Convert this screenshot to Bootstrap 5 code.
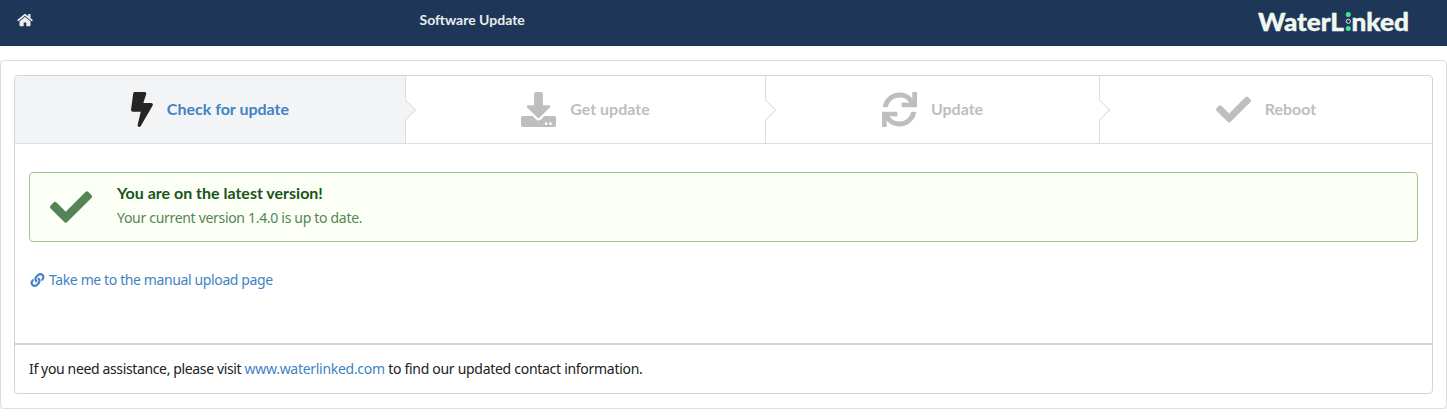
<!DOCTYPE html>
<html lang="en">
<head>
<meta charset="utf-8">
<meta name="viewport" content="width=device-width, initial-scale=1">
<title>Software Update</title>
<link href="https://cdn.jsdelivr.net/npm/bootstrap@5.3.0/dist/css/bootstrap.min.css" rel="stylesheet">
<style>
body{font:14px/20px "Noto Sans","Open Sans",sans-serif;color:#212121;background:#fff}
a{color:#4183c4;text-decoration:none}
.topbar{height:46px;background:#1e3658}
.topbar .home-link{width:403.5px;padding-left:17px;height:15px;line-height:0;margin-bottom:6px}
.page-title{font:bold 14px/20px Lato,sans-serif;color:#e9ebee;margin-bottom:6px}
.brand-logo{margin-right:38px}
.panel{margin-top:14px;height:349px;padding:14px 13px;border:1px solid #dcdddd;border-radius:4px;box-shadow:0 1px 2px rgba(34,36,38,.15)}
.box{height:319px;border:1px solid #d4d4d5;border-radius:4px}
.steps{height:68px;border-bottom:1px solid #dcdddd}
.step-cell{position:relative;gap:14px;border-right:1px solid #dcdddd;color:#bebebe;font:bold 16px/20px Lato,sans-serif}
.step-cell:nth-child(1){width:391px;background:#f3f4f5;border-radius:3px 0 0 0}
.step-cell:nth-child(2){width:360px}
.step-cell:nth-child(3){width:334px}
.step-cell:nth-child(4){width:332px;border-right:0}
.step-cell:not(:last-child)::after{content:"";position:absolute;z-index:1;right:-7.5px;top:calc(50% + .5px);width:15px;height:15px;background:#fff;border:solid #dcdddd;border-width:0 1px 1px 0;transform:translateY(-50%) rotate(-45deg)}
.step-cell:first-child::after{background:#f3f4f5}
.step-cell svg{height:35px;fill:currentColor}
.step-cell span{margin-bottom:2px}
.current-title{color:#4183c4}
.bolt{color:#252525}
.body-area{height:201px;padding:28px 14px 0;border-bottom:2px solid #d4d4d5}
.notice{height:70px;padding:0 20px;gap:25px;background:#fcfff5;border:1px solid #a3c293;border-radius:4px;color:#548455}
.notice h1{font:bold 16px/20px Lato,sans-serif;color:#1a531b;margin:0 0 5px}
.notice-text{margin-bottom:3px}
.txt-a{letter-spacing:-.31px}
.txt-b{letter-spacing:-.38px}
.upload-link{margin:28px 0 0 .5px;gap:4.5px}
.help{height:48px;padding:0 14px 1px;letter-spacing:-.29px}
.help .lead-in{letter-spacing:-.36px}
</style>
</head>
<body>
<nav class="topbar d-flex align-items-center">
  <a class="home-link" href="#" aria-label="Home"><svg width="16" height="14" viewBox="0 0 576 512" fill="#e9ebee"><path d="M488 312.7V456c0 13.3-10.7 24-24 24H348c-6.600 0-12-5.400-12-12V356c0-6.600-5.400-12-12-12h-72c-6.600 0-12 5.400-12 12v112c0 6.600-5.400 12-12 12H112c-13.300 0-24-10.700-24-24V312.700c0-3.600 1.600-7 4.400-9.300l188-154.800c4.400-3.600 10.800-3.600 15.300 0l188 154.800c2.700 2.300 4.300 5.700 4.300 9.300zm83.600-60.900L488 182.900V44.400c0-6.600-5.400-12-12-12h-56c-6.600 0-12 5.400-12 12V117l-89.500-73.700c-17.700-14.600-43.300-14.600-61 0L4.400 251.800c-5.100 4.200-5.800 11.800-1.600 16.900l25.500 31c4.200 5.100 11.800 5.800 16.900 1.600l235.200-193.700c4.400-3.600 10.800-3.600 15.300 0l235.200 193.700c5.100 4.200 12.700 3.500 16.900-1.600l25.500-31c4.200-5.200 3.400-12.700-1.700-16.900z"/></svg></a>
  <span class="page-title ms-3">Software Update</span>
  <svg class="brand-logo ms-auto" width="151" height="46" role="img" aria-label="WaterLinked">
    <g font-family="Lato, sans-serif" font-weight="900" font-size="25" fill="#f0f8ef" stroke="#f0f8ef" stroke-width=".4">
      <text x="0" y="30.700" textLength="86" lengthAdjust="spacingAndGlyphs">WaterL</text>
      <text x="93.500" y="30.700" textLength="57.500" lengthAdjust="spacingAndGlyphs">nked</text>
    </g>
    <circle cx="90.300" cy="14.500" r="2.500" fill="#3ee88a"/>
    <circle cx="90.300" cy="21.300" r="2.100" fill="none" stroke="#f0f8ef" stroke-width=".9"/>
    <circle cx="90.300" cy="28.500" r="2.500" fill="#3ee88a"/>
  </svg>
</nav>
<main class="panel">
  <div class="box">
    <div class="steps d-flex">
      <div class="step-cell d-flex align-items-center justify-content-center">
        <svg class="bolt" viewBox="0 0 320 512"><path d="M296 160H180.600l42.600-129.800C227.200 15 215.700 0 200 0H56C44 0 33.800 8.900 32.200 20.800l-32 240C-1.700 275.200 9.500 288 24 288h118.700L96.600 482.500c-3.600 15.200 8 29.500 23.300 29.500 8.400 0 16.400-4.400 20.800-12l176-304c9.300-15.900-2.200-36-20.700-36z"/></svg>
        <span class="current-title">Check for update</span>
      </div>
      <div class="step-cell d-flex align-items-center justify-content-center">
        <svg viewBox="0 0 512 512"><path d="M216 0h80c13.300 0 24 10.700 24 24v168h87.700c17.800 0 26.700 21.500 14.100 34.100L269.700 378.300c-7.500 7.500-19.800 7.500-27.300 0L90.100 226.100c-12.600-12.600-3.700-34.100 14.100-34.100H192V24c0-13.300 10.700-24 24-24zm296 376v112c0 13.300-10.700 24-24 24H24c-13.300 0-24-10.700-24-24V376c0-13.300 10.700-24 24-24h146.700l49 49c20.100 20.100 52.500 20.100 72.600 0l49-49H488c13.300 0 24 10.700 24 24zm-124 88c0-11-9-20-20-20s-20 9-20 20 9 20 20 20 20-9 20-20zm64 0c0-11-9-20-20-20s-20 9-20 20 9 20 20 20 20-9 20-20z"/></svg>
        <span>Get update</span>
      </div>
      <div class="step-cell d-flex align-items-center justify-content-center">
        <svg viewBox="0 0 512 512"><path d="M440.650 12.570l4 82.770A247.160 247.160 0 0 0 255.830 8C134.730 8 33.910 94.920 12.290 209.820A12 12 0 0 0 24.090 224h49.050a12 12 0 0 0 11.670-9.260 175.910 175.910 0 0 1 317-56.940l-101.460-4.860a12 12 0 0 0-12.570 12v47.410a12 12 0 0 0 12 12H500a12 12 0 0 0 12-12V12a12 12 0 0 0-12-12h-47.370a12 12 0 0 0-11.980 12.570zM255.830 432a175.610 175.610 0 0 1-146-77.800l101.800 4.870a12 12 0 0 0 12.570-12v-47.400a12 12 0 0 0-12-12H12a12 12 0 0 0-12 12V500a12 12 0 0 0 12 12h47.350a12 12 0 0 0 12-12.600l-4.150-82.570A247.170 247.170 0 0 0 255.830 504c121.110 0 221.930-86.920 243.550-201.820a12 12 0 0 0-11.800-14.180h-49.050a12 12 0 0 0-11.670 9.260A175.860 175.860 0 0 1 255.830 432z"/></svg>
        <span>Update</span>
      </div>
      <div class="step-cell d-flex align-items-center justify-content-center">
        <svg viewBox="0 0 512 512"><path d="M173.898 439.404l-166.400-166.400c-9.997-9.997-9.997-26.206 0-36.204l36.203-36.204c9.997-9.998 26.207-9.998 36.204 0L192 312.690 432.095 72.596c9.997-9.997 26.207-9.997 36.204 0l36.203 36.204c9.997 9.997 9.997 26.206 0 36.204l-294.400 294.401c-9.998 9.997-26.207 9.997-36.204-.001z"/></svg>
        <span>Reboot</span>
      </div>
    </div>
    <div class="body-area">
      <div class="notice d-flex align-items-center">
        <svg width="42" height="42" viewBox="0 0 512 512" fill="currentColor"><path d="M173.898 439.404l-166.400-166.400c-9.997-9.997-9.997-26.206 0-36.204l36.203-36.204c9.997-9.998 26.207-9.998 36.204 0L192 312.690 432.095 72.596c9.997-9.997 26.207-9.997 36.204 0l36.203 36.204c9.997 9.997 9.997 26.206 0 36.204l-294.400 294.401c-9.998 9.997-26.207 9.997-36.204-.001z"/></svg>
        <div class="notice-text"><h1>You are on the latest version!</h1><span class="d-block txt-a">Your current version 1.4.0 is up to date.</span></div>
      </div>
      <a class="upload-link d-inline-flex align-items-center" href="#"><svg width="15" height="14" viewBox="0 0 512 512" fill="currentColor"><path d="M326.612 185.391c59.747 59.809 58.927 155.698.36 214.590-.110.120-.240.250-.360.370l-67.200 67.200c-59.270 59.270-155.699 59.262-214.960 0-59.270-59.260-59.270-155.700 0-214.960l37.106-37.106c9.840-9.840 26.786-3.300 27.294 10.606.648 17.722 3.826 35.527 9.690 52.721 1.986 5.822.567 12.262-3.783 16.612l-13.087 13.087c-28.026 28.026-28.905 73.660-1.155 101.960 28.024 28.579 74.086 28.749 102.325.510l67.200-67.190c28.191-28.191 28.073-73.757 0-101.830-3.701-3.694-7.429-6.564-10.341-8.569a16.037 16.037 0 0 1-6.947-12.606c-.396-10.567 3.348-21.456 11.698-29.806l21.054-21.055c5.521-5.521 14.182-6.199 20.584-1.731a152.482 152.482 0 0 1 20.522 17.197zM467.547 44.449c-59.261-59.262-155.690-59.270-214.960 0l-67.200 67.200c-.120.120-.250.250-.360.370-58.566 58.892-59.387 154.781.360 214.590a152.454 152.454 0 0 0 20.521 17.196c6.402 4.468 15.064 3.789 20.584-1.731l21.054-21.055c8.350-8.350 12.094-19.239 11.698-29.806a16.037 16.037 0 0 0-6.947-12.606c-2.912-2.005-6.640-4.875-10.341-8.569-28.073-28.073-28.191-73.639 0-101.830l67.200-67.190c28.239-28.239 74.300-28.069 102.325.510 27.750 28.300 26.872 73.934-1.155 101.960l-13.087 13.087c-4.350 4.350-5.769 10.790-3.783 16.612 5.864 17.194 9.042 34.999 9.690 52.721.509 13.906 17.454 20.446 27.294 10.606l37.106-37.106c59.271-59.259 59.271-155.699.001-214.959z"/></svg><span class="txt-b">Take me to the manual upload page</span></a>
    </div>
    <div class="help d-flex align-items-center"><span><span class="lead-in">If you need assistance, please visit </span><a href="#">www.waterlinked.com</a> to find our updated contact information.</span></div>
  </div>
</main>
<script src="https://cdn.jsdelivr.net/npm/bootstrap@5.3.0/dist/js/bootstrap.bundle.min.js"></script>
</body>
</html>
